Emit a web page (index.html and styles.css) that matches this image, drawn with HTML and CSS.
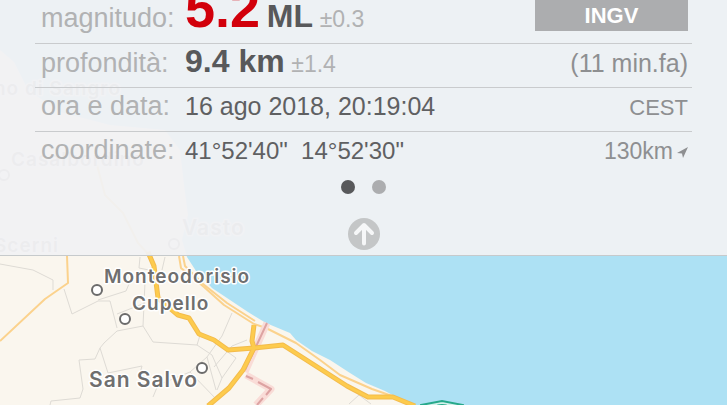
FILE: index.html
```html
<!DOCTYPE html>
<html lang="it">
<head>
	<meta charset="utf-8">
	<title>Terremoto 5.2 ML</title>
	<link rel="stylesheet" href="styles.css">
</head>
<body>
	<div class="screen">
		<svg class="map" viewBox="0 0 727 405" preserveAspectRatio="xMinYMin slice">
			<rect class="sea" width="727" height="405" />
			<path class="land" d="M0 50 L14 62 L28 90 L60 112 L110 125 L165 130 L180 150 L184 185 L188 215 L182 240 L187 257 L196 271 L212 288 L230 300 L248 312 L266 323 L290 333 L296 340 L312 351 L330 360 L350 373 L366 383 L385 391 L400 399 L415 405 L0 405 Z" />

			<!-- minor roads -->
			<g class="minor">
				<path d="M0 264 L33 270 L53 280 L53 290 M64 289 L72 314 L98 301 L110 301 L115 320 L117 328 M98 300 L126 291 L132 277 L139 276 M140 257 L139 268 L149 270 M165 257 L162 270" />
				<path d="M145 282 L143 326 L117 331 L104 343 L100 348 L95 359 L79 360 L83 389 L80 398 L51 401 L50 405 M100 348 L108 373 L142 366 L140 373 M143 326 L153 342 L197 345 L201 332 M153 397 L158 385 L190 372 M117 314 L145 303" />
				<path d="M232 313 L222 336 L207 357 L190 372 L217 400 M197 345 L212 355 L222 378 L217 390 M222 378 L236 358 L225 350 M207 357 L216 390 M214 367 L232 346 L247 340 M349 404 L359 395 L371 404" />
			</g>

			<!-- motorway and railway along the coast -->
			<g class="coast-road">
				<path d="M179 256 L181 268 L204 287 L224 305 L254 324 L266 328 L296 343 L320 360 L340 375 L372 389 L392 396" />
				<path d="M183 256 L185 266 L203 284 L227 303 L255 321" />
				<path d="M67 256 L68 283 L45 299 L0 341 M97 165 L105 195 L123 213 L138 243 L150 256" />
			</g>

			<path class="border-glow" d="M267 323 L245 372 M246 375 L271 389 L256 405" />
			<path class="border" d="M267 323 L245 370 M246 376 L253 379 M258 382 L271 389 L266 395 M263 398 L257 405" />

			<g class="main-casing">
				<path d="M148 252 L154 266 L158 298 L178 315 L189 318 L199 334 L214 340 L228 350 L254 348 L283 345 L347 386 L368 397 L393 397 L415 406" />
				<path d="M254 325 L252 341 L254 348 L243 370 L229 388 L208 406" />
			</g>
			<g class="main-road">
				<path d="M148 252 L154 266 L158 298 L178 315 L189 318 L199 334 L214 340 L228 350 L254 348 L283 345 L347 386 L368 397 L393 397 L415 406" />
				<path d="M254 325 L252 341 L254 348 L243 370 L229 388 L208 406" />
			</g>

			<path class="shield" d="M421 405 L442 401 L463 405 V412 H421 Z" />
			<ellipse class="shield-mark" cx="442" cy="406" rx="6" ry="2" />

			<g class="town">
				<circle cx="97" cy="290" r="5" />
				<circle cx="125" cy="319" r="5" />
				<circle cx="202" cy="368" r="5" />
				<circle class="faint" cx="174" cy="244" r="5" />
				<circle class="faint" cx="4" cy="175" r="5" />
			</g>
			<g class="town-name">
				<text x="104" y="283">Monteodorisio</text>
				<text x="132" y="310">Cupello</text>
				<text class="city" x="89" y="387">San Salvo</text>
				<text class="city faint" x="182" y="235">Vasto</text>
				<text class="faint" x="-6" y="252">Scerni</text>
				<text class="faint" x="11" y="166">Casalbordino</text>
				<text class="faint" x="-6" y="95">no di Sangro</text>
			</g>
		</svg>

		<section class="panel">
			<dl class="details">
				<div class="row magnitude">
					<dt>magnitudo:</dt>
					<dd class="value"><span class="number">5.2</span> <b>ML</b> <small>±0.3</small></dd>
					<dd class="side"><button class="source" type="button">INGV</button></dd>
				</div>
				<div class="row depth">
					<dt>profondità:</dt>
					<dd class="value"><b>9.4 km</b> <small>±1.4</small></dd>
					<dd class="side ago">(11 min.fa)</dd>
				</div>
				<div class="row">
					<dt>ora e data:</dt>
					<dd class="value date">16 ago 2018, 20:19:04</dd>
					<dd class="side">CEST</dd>
				</div>
				<div class="row">
					<dt>coordinate:</dt>
					<dd class="value">41°52'40"&nbsp; 14°52'30"</dd>
					<dd class="side distance">130km<svg class="heading" viewBox="0 0 12 12"><path d="M12 0 L7 11 L6 6.500 L1 6 Z" /></svg></dd>
				</div>
			</dl>
			<div class="pages">
				<button class="dot current" type="button" aria-label="Pagina 1"></button>
				<button class="dot" type="button" aria-label="Pagina 2"></button>
			</div>
			<button class="close" type="button" aria-label="Chiudi">
				<svg viewBox="0 0 32 32"><circle cx="16" cy="16" r="16" /><path d="M16 25.500 V8 M8 15 L16 7 L24 15" /></svg>
			</button>
		</section>
	</div>
</body>
</html>
```
FILE: styles.css
```css
body {
	margin: 0;
	background: #fff;
	font-family: "Liberation Sans", Arial, sans-serif;
	overflow: hidden;
}

button {
	border: 0;
	padding: 0;
	font-family: inherit;
}

.screen {
	position: relative;
	min-height: 100vh;
	margin-right: 1px;
}

/* map */
.map {
	position: absolute;
	top: 0;
	left: 0;
	width: 100%;
	height: 100%;
}

.sea {
	fill: #ade1f4;
}

.land {
	fill: #faf6ee;
}

.minor,
.coast-road,
.main-casing,
.main-road,
.border,
.border-glow {
	fill: none;
	stroke-linejoin: round;
}

.minor {
	stroke: #dedbd5;
	stroke-width: 1;
}

.coast-road {
	stroke: #fbd28d;
	stroke-width: 2;
}

.main-casing {
	stroke: #f3bb4c;
	stroke-width: 5;
}

.main-road {
	stroke: #fdcb4d;
	stroke-width: 3;
}

.border-glow {
	stroke: #f9dcd7;
	stroke-width: 7;
}

.border {
	stroke: #dda3a2;
	stroke-width: 2;
}

.shield {
	fill: #d5f2ec;
	stroke: #27a98b;
	stroke-width: 2;
}

.shield-mark {
	fill: #27a98b;
}

.town {
	fill: #fff;
	stroke: #6b6b6b;
	stroke-width: 2;
}

.town-name {
	font-family: Inter, sans-serif;
	font-size: 19px;
	font-weight: 600;
	letter-spacing: 1px;
	fill: #6f6f6f;
	stroke: #fff;
	stroke-width: 3;
	stroke-linejoin: round;
	paint-order: stroke;
}

.city {
	font-size: 21px;
}

.faint {
	opacity: .7;
}

/* quake panel */
.panel {
	position: relative;
	display: flex;
	flex-direction: column;
	align-items: center;
	padding: 0 35px 5px;
	border-bottom: 1px solid #c6cacc;
	background: rgba(241, 241, 243, .94);
}

.details {
	align-self: stretch;
	margin: 0;
}

.row {
	display: grid;
	grid-template-columns: 144px 1fr auto;
	align-items: baseline;
	height: 43px;
	padding: 0 4px 0 6px;
	border-bottom: 1px solid #c9cbcd;
	line-height: 36px;
	white-space: nowrap;
}

.row:last-child {
	border: 0;
}

dt {
	font-size: 27px;
	color: #b1b2b3;
}

dd {
	margin: 0;
}

.value {
	font-size: 24px;
	color: #5f6062;
}

.value b {
	font-size: 32px;
	color: #58595b;
}

.value small {
	font-size: 23px;
	color: #b1b2b3;
}

.value .number {
	font-size: 54px;
	font-weight: bold;
	color: #d2000b;
}

.value.date {
	font-size: 25px;
}

.side {
	font-size: 22px;
	color: #8e8f91;
}

.ago {
	font-size: 25px;
}

.distance {
	font-size: 23px;
}

.magnitude {
	line-height: 16px;
}

.magnitude .side {
	align-self: start;
}

.depth {
	line-height: 34px;
}

.source {
	display: block;
	width: 153px;
	height: 31px;
	background: #acadaf;
	color: #fff;
	font-size: 22px;
	font-weight: bold;
}

.heading {
	width: 12px;
	height: 12px;
	margin-left: 3px;
	fill: #8e8f91;
}

.pages {
	display: flex;
	gap: 17px;
	padding: 5px 0 24px;
}

.dot {
	width: 14px;
	height: 14px;
	border-radius: 50%;
	background: #acadaf;
}

.current {
	background: #58595b;
}

.close {
	width: 32px;
	height: 32px;
	background: none;
}

.close svg {
	display: block;
	fill: #c4c6c7;
}

.close path {
	fill: none;
	stroke: #f6f7f8;
	stroke-width: 4;
	stroke-linecap: round;
	stroke-linejoin: round;
}
```
